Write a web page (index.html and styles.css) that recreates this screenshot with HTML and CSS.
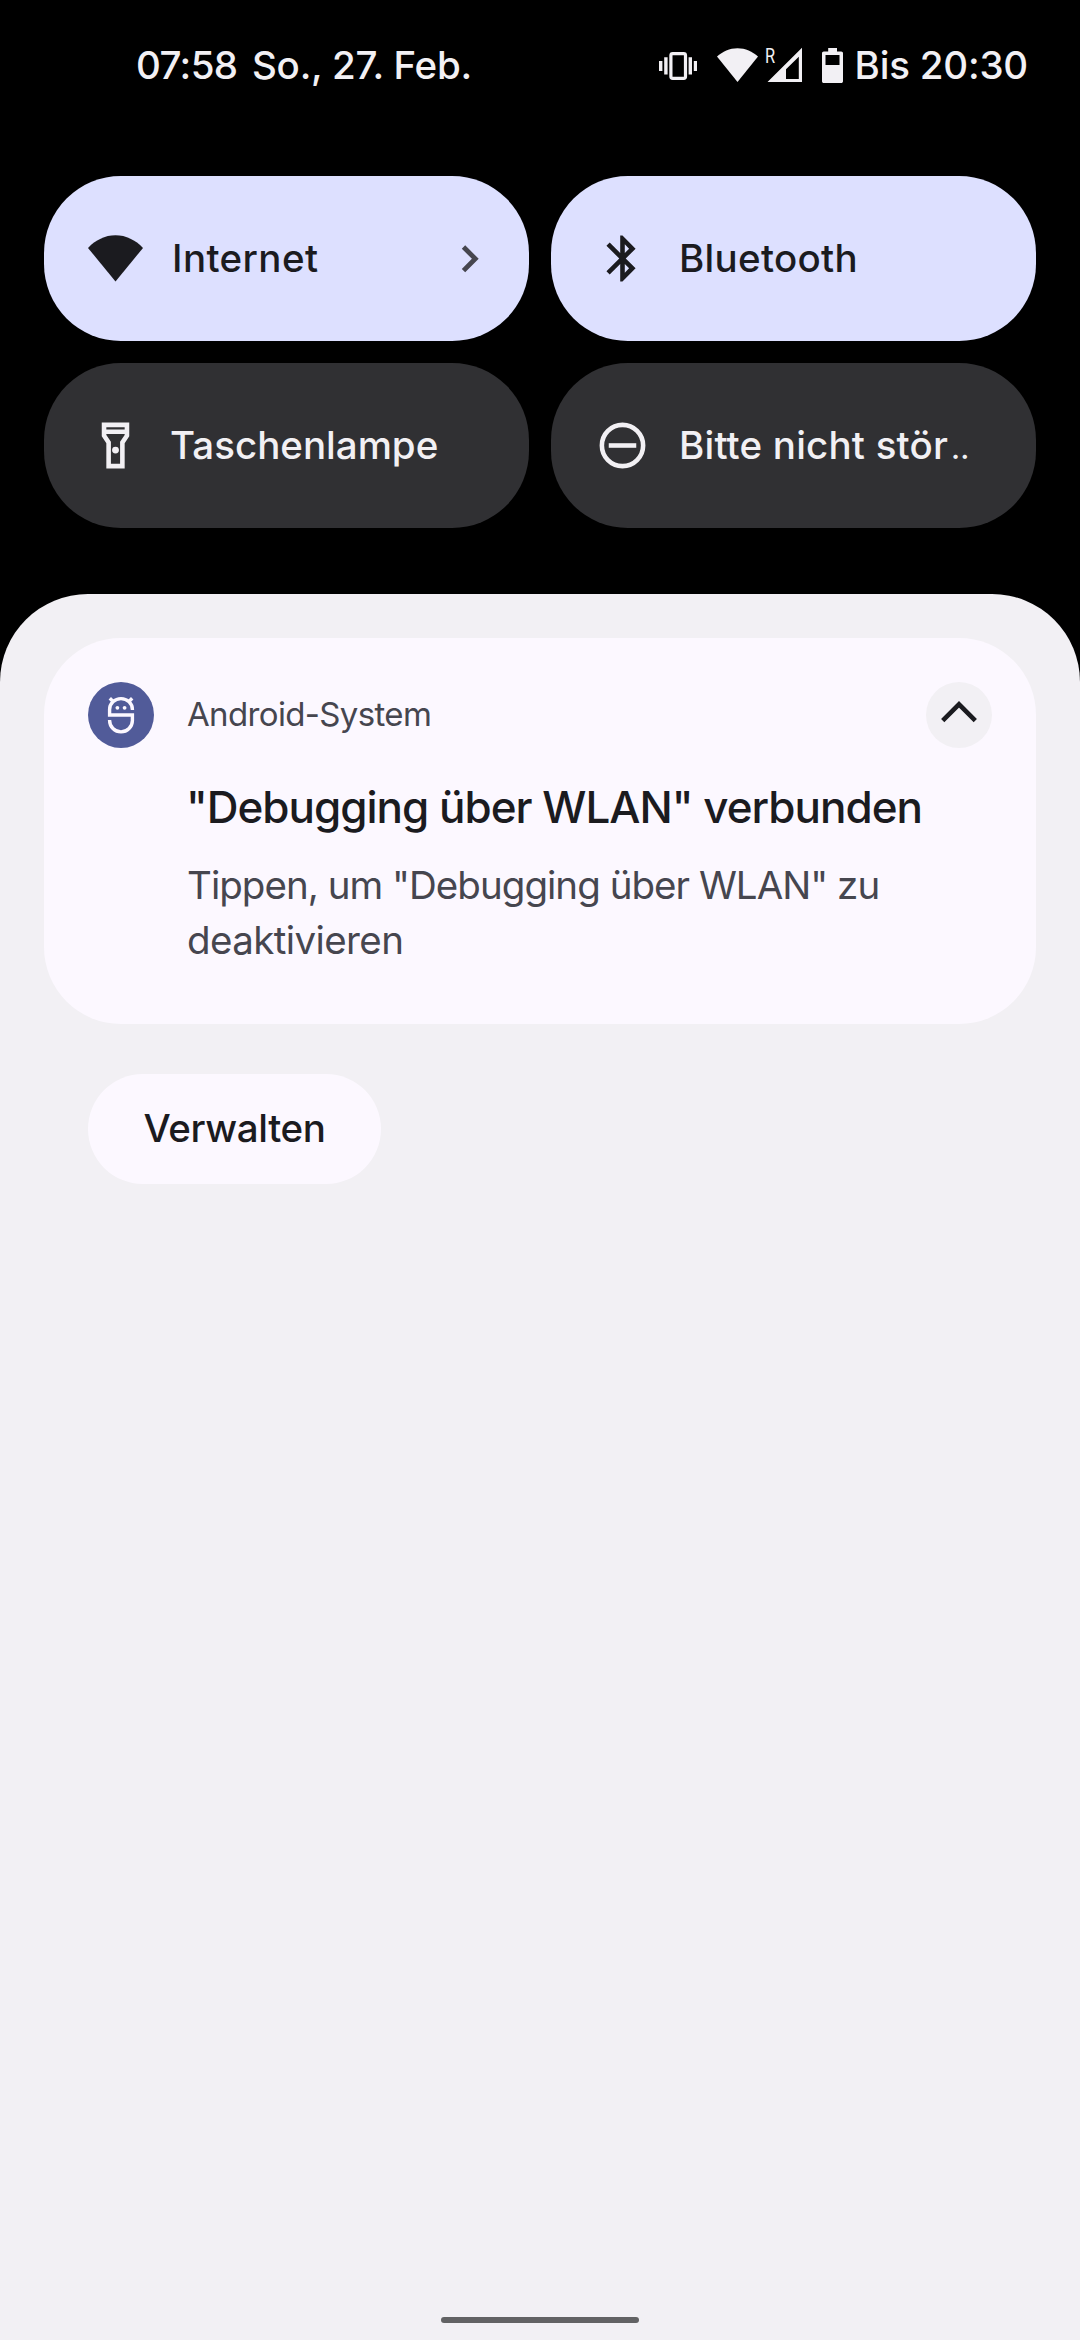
FILE: index.html
```html
<!DOCTYPE html>
<html lang="de">
<head>
<meta charset="utf-8">
<title>Benachrichtigungen</title>
<link rel="stylesheet" href="styles.css">
</head>
<body>
<div class="screen">
  <header class="status">
    <span class="clock">07:58</span>
    <span class="date">So., 27. Feb.</span>
    <div class="status-icons">
      <svg class="vibrate" width="38" height="28" viewBox="0 0 38 28">
        <rect x="11.9" y="1.6" width="14.6" height="24.8" rx="1.8" fill="none" stroke="currentColor" stroke-width="3.2"/>
        <path fill="currentColor" d="M0 9h3.4v10H0zM5.2 5.2h3.4v17.2H5.2zM29.6 5.2H33v17.2h-3.4zM34.8 9h3.4v10h-3.4z"/>
      </svg>
      <svg class="wifi" width="41" height="34" viewBox="0 0 41 34">
        <path fill="currentColor" d="M20.5 34L0 8.6C5.5 3.4 12.6.2 20.5.2S35.5 3.4 41 8.6z"/>
      </svg>
      <div class="signal">
        <svg width="36" height="36" viewBox="0 0 36 36">
          <path fill="currentColor" fill-rule="evenodd" d="M.5 35H35V.8zM19 32h12.8V9.8L19 22.3z"/>
        </svg>
        <span class="roaming">R</span>
      </div>
      <svg class="battery" width="21" height="35" viewBox="0 0 21 35">
        <path fill="currentColor" fill-rule="evenodd" d="M6.2 0H15v3.5h4.2c1 0 1.8.8 1.8 1.8v27.9c0 1-.8 1.8-1.8 1.8H1.8c-1 0-1.8-.8-1.8-1.8V5.3c0-1 .8-1.8 1.8-1.8h4.4zM3.5 7v10h14V7z"/>
      </svg>
      <span class="until">Bis 20:30</span>
    </div>
  </header>

  <section class="tiles">
    <div class="tile active">
      <svg width="55" height="55" viewBox="0 0 24 24"><path fill="currentColor" d="M12 22L0 7.4C3.3 4 7.4 1.9 12 1.9S20.7 4 24 7.4z"/></svg>
      <span class="label internet">Internet</span>
      <svg class="chevron" width="22" height="32" viewBox="0 0 22 32"><path fill="none" stroke="currentColor" stroke-width="4.8" d="M3.5 4L15.3 15.8L3.5 27.6"/></svg>
    </div>
    <div class="tile active">
      <svg width="55" height="55" viewBox="0 0 24 24"><path fill="currentColor" d="M17.71 7.71L12 2h-1v7.59L6.41 5 5 6.41 10.59 12 5 17.59 6.41 19 11 14.41V22h1l5.71-5.71-4.3-4.29zM13 5.83l1.88 1.88L13 9.59zm1.88 10.46L13 18.17v-3.76z"/></svg>
      <span class="label bluetooth">Bluetooth</span>
    </div>
    <div class="tile">
      <svg width="55" height="55" viewBox="0 0 24 24"><path fill="currentColor" fill-rule="evenodd" d="M18 2H6v6l2 3v11h8V11l2-3zM16 4v1H8V4zM14 10.4V20h-4v-9.600L8 7.390V7h8v.390z"/><circle cx="12" cy="14" r="1.5" fill="currentColor"/></svg>
      <span class="label torch">Taschenlampe</span>
    </div>
    <div class="tile">
      <svg width="55" height="55" viewBox="0 0 24 24"><circle cx="12" cy="12" r="9" fill="none" stroke="currentColor" stroke-width="2"/><path fill="currentColor" d="M6 11h12v2H6z"/></svg>
      <span class="label dnd">Bitte nicht stör<small>..</small></span>
    </div>
  </section>

  <main class="shade">
    <article class="card">
      <svg class="app-icon" width="66" height="66" viewBox="0 0 66 66">
        <circle cx="33" cy="33" r="33" fill="#515b99"/>
        <g fill="none" stroke="#fcf8ff" stroke-width="3.4">
          <path d="M44.4 28V27.4A11.4 10.8 0 0 0 21.6 27.4V33H44.4V38.5A11.4 11.4 0 0 1 21.6 38.5V38"/>
          <path d="M21.8 16.3l4 4M44.2 16.3l-4 4"/>
        </g>
        <circle cx="29.4" cy="25.8" r="1.9" fill="#fcf8ff"/><circle cx="36.6" cy="25.8" r="1.9" fill="#fcf8ff"/>
      </svg>
      <div class="content">
        <div class="app">Android-System</div>
        <h1 class="title">"Debugging über WLAN" verbunden</h1>
        <p class="text"><span class="line1">Tippen, um "Debugging über WLAN" zu</span> <span class="line2">deaktivieren</span></p>
      </div>
      <div class="expand">
        <svg width="40" height="24" viewBox="0 0 40 24"><path fill="none" stroke="currentColor" stroke-width="4.6" d="M3.7 20.7L20 4.3L36.3 20.7"/></svg>
      </div>
    </article>
    <div class="manage"><span>Verwalten</span></div>
    <div class="home"></div>
  </main>
</div>
</body>
</html>
```
FILE: styles.css
```css
* { box-sizing: border-box; }
body { margin: 0; background: #000; }
svg { display: block; flex: none; }
.screen {
  width: 1080px; height: 2340px; background: #000; color: #f2f0f4;
  font-family: Inter, Roboto, sans-serif; font-size: 38.5px; font-weight: 500;
  line-height: 46px; display: flex; flex-direction: column; white-space: nowrap;
}
.status { height: 176px; padding: 42px 52px 0 136px; display: flex; align-items: flex-start; }
.clock { width: 116px; letter-spacing: -0.6px; }
.date { letter-spacing: -0.25px; }
.until { letter-spacing: -0.2px; }
.status-icons { margin-left: auto; height: 46px; display: flex; align-items: flex-start; }
.vibrate { margin: 10px 20px 0 0; }
.wifi { margin: 6px 9px 0 0; }
.signal { position: relative; margin: 5.5px 19px 0 0; height: 36px; }
.signal svg { margin-top: -1px; }
.roaming {
  position: absolute; left: -2px; top: -1px; font-family: Roboto, sans-serif;
  font-size: 20px; font-weight: 400; line-height: 18px; transform: scaleX(0.82); transform-origin: left;
}
.battery { margin: 6px 12px 0 0; }
.tiles {
  padding: 0 44px; height: 418px; display: grid; gap: 22px;
  grid-template-columns: 1fr 1fr; grid-template-rows: 165px 165px;
}
.tile {
  border-radius: 77px; background: #303033; padding: 0 44px;
  display: flex; align-items: center; gap: 27px;
}
.tile.active { background: #dde0ff; color: #1b1b1f; }
.chevron { margin-left: auto; margin-right: 3px; color: #46464f; }
.label { padding-bottom: 2px; }
.internet { margin-left: 2px; letter-spacing: 0.4px; }
.bluetooth { margin-left: 2px; letter-spacing: 0.3px; }
.dnd { margin-left: 2px; letter-spacing: 0.2px; }
.label small { font-size: 30px; line-height: 0; margin-left: 3px; }
.shade {
  flex: 1; background: #f2f0f4; border-radius: 88px 88px 0 0; padding: 44px 44px 17px;
  color: #1b1b1f; display: flex; flex-direction: column; align-items: flex-start;
}
.card {
  width: 992px; height: 386px; border-radius: 77px; background: #fcf8ff;
  padding: 44px; display: flex; align-items: flex-start;
}
.content { margin-left: 33px; flex: 1; min-width: 0; }
.app { font-size: 33px; line-height: 65px; font-weight: 400; color: #46464f; letter-spacing: -0.65px; }
.title { margin: 33px 0 0 -1px; font-size: 44px; line-height: 54px; font-weight: 500; letter-spacing: -1px; }
.text { margin: 24px 0 0; font-weight: 400; line-height: 55px; color: #46464f; }
.line1, .line2 { display: block; }
.line1 { letter-spacing: -0.97px; }
.line2 { letter-spacing: -0.6px; }
.expand {
  width: 66px; height: 66px; border-radius: 50%; background: #f2f0f4;
  display: flex; justify-content: center; padding-top: 18px; margin-left: -66px;
}
.manage {
  margin: 50px 0 0 44px; width: 293px; height: 110px; border-radius: 55px; background: #fcf8ff;
  display: flex; align-items: center; justify-content: center; padding-bottom: 2px; letter-spacing: -0.4px;
}
.home { margin: auto auto 0; width: 198px; height: 6px; border-radius: 3px; background: #626264; }
```
